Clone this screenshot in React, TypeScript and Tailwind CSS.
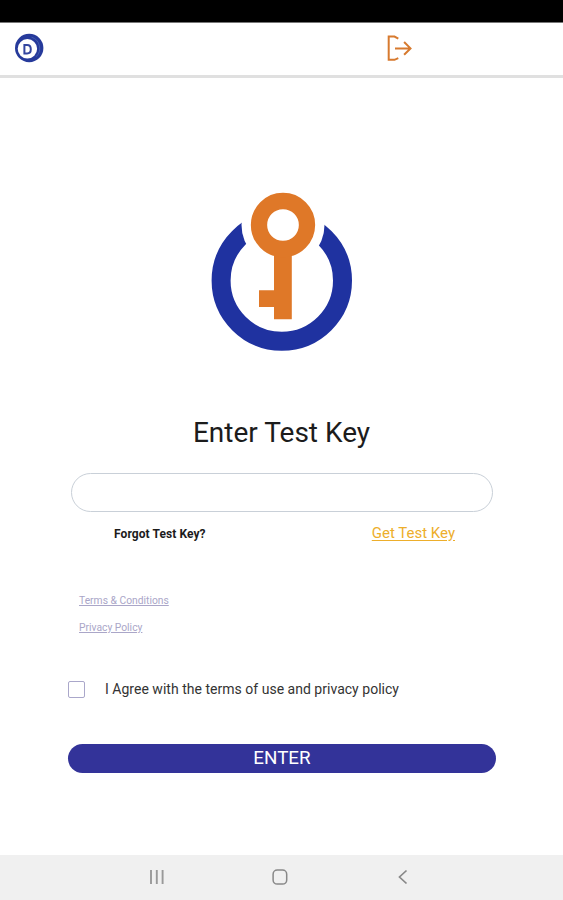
function BrandMark() {
  return (
    <svg className="ml-[14px] h-[30px] w-[30px]" viewBox="0 0 30 30">
      <circle cx="15.2" cy="15" r="14.2" fill="#263a9b" />
      <circle cx="13.4" cy="15.8" r="9.7" fill="#fff" />
      <path d="M10.4 12h2.7c2.4 0 3.7 1.6 3.7 4.2s-1.3 4.2-3.7 4.2h-2.7z" fill="none" stroke="#33459f" strokeWidth="2" />
      <path d="M17.5 4.2a11.6 11.6 0 0 1 4.5 19.6" fill="none" stroke="#4964b2" strokeWidth="0.8" />
    </svg>
  );
}

function LogoutIcon() {
  return (
    <svg className="ml-[340px] h-[28px] w-[30px] shrink-0" viewBox="0 0 30 28" fill="none" stroke="#d77a2f">
      <path d="M14.3 4.6 10.5 2.6H4.7v23.2h5.8l3.8-1.6" strokeWidth="2" />
      <path d="M11 14.4h15.7M20.1 8l6.4 6.4-6.4 6.4" strokeWidth="2" />
    </svg>
  );
}

function KeyLogo() {
  return (
    <svg className="ml-[200px] mt-[102px] block h-[180px] w-[165px] shrink-0" viewBox="0 0 165 180">
      <circle cx="81.8" cy="100.6" r="60.7" fill="none" stroke="#1f32a0" strokeWidth="19" />
      <circle cx="83" cy="45" r="41.5" fill="#fff" />
      <path d="M74 73h17.8v66.3H74V127H59v-16.7h15z" fill="#df7828" />
      <circle cx="83" cy="45" r="24" fill="none" stroke="#df7828" strokeWidth="16.3" />
    </svg>
  );
}

export default function App() {
  return (
    <div className="flex h-[900px] w-[563px] flex-col overflow-hidden bg-white font-['Roboto',sans-serif] text-[#1c1c1c]">
      <div className="h-[23px] shrink-0 border-b border-[#777] bg-black" />
      <header className="flex h-[55px] shrink-0 items-center border-b-[3px] border-[#e0e0e0] pb-[2px]">
        <BrandMark />
        <LogoutIcon />
      </header>
      <main className="flex grow flex-col">
        <KeyLogo />
        <h1 className="mt-[57px] h-8 whitespace-nowrap text-center text-[28px] leading-8">Enter Test Key</h1>
        <input aria-label="Test key" className="ml-[71px] mt-[24px] h-[39px] w-[422px] shrink-0 rounded-full border border-[#c9d0d8] bg-white px-5 outline-none" />
        <div className="mt-[11px] flex h-5 items-center justify-between pl-[114px] pr-[108px]">
          <span className="mt-[2px] whitespace-nowrap text-[12px] font-bold tracking-[0.08px]">Forgot Test Key?</span>
          <a className="whitespace-nowrap text-[15px] text-[#edae2b] underline underline-offset-2">Get Test Key</a>
        </div>
        <nav className="ml-[79px] mt-[50px] flex flex-col items-start gap-[11px] text-[10.3px] leading-4 text-[#aaa6c8]">
          <a className="whitespace-nowrap underline">Terms &amp; Conditions</a>
          <a className="whitespace-nowrap underline">Privacy Policy</a>
        </nav>
        <label className="ml-[68px] mt-[43px] flex h-5 items-center">
          <span className="h-[17px] w-[17px] rounded-[2px] border-[1.5px] border-[#aaa7ca]" />
          <span className="ml-[20px] whitespace-nowrap text-[14px] tracking-[0.02px] text-[#333]">I Agree with the terms of use and privacy policy</span>
        </label>
        <button className="ml-[68px] mt-[45px] h-[29px] w-[428px] shrink-0 rounded-full bg-[#333399] text-[18.8px] leading-[28px] text-white"><span className="block h-[29px]">ENTER</span></button>
      </main>
      <footer className="flex h-[45px] shrink-0 bg-[#f0f0f0]">
        <svg className="ml-[147px] mt-[12px] h-5 w-5" viewBox="0 0 20 20" stroke="#999" strokeWidth="1.9">
          <path d="M4 3v14M9.8 3v14M15.6 3v14" />
        </svg>
        <svg className="ml-[103px] mt-[12px] h-5 w-5" viewBox="0 0 20 20" fill="none" stroke="#888" strokeWidth="1.5">
          <rect x="3.1" y="3.1" width="13.6" height="14" rx="4.2" />
        </svg>
        <svg className="ml-[103px] mt-[12px] h-5 w-5" viewBox="0 0 20 20" fill="none" stroke="#888" strokeWidth="1.7">
          <path d="m13.5 3.5-7 6.5 7 6.5" />
        </svg>
      </footer>
    </div>
  );
}
